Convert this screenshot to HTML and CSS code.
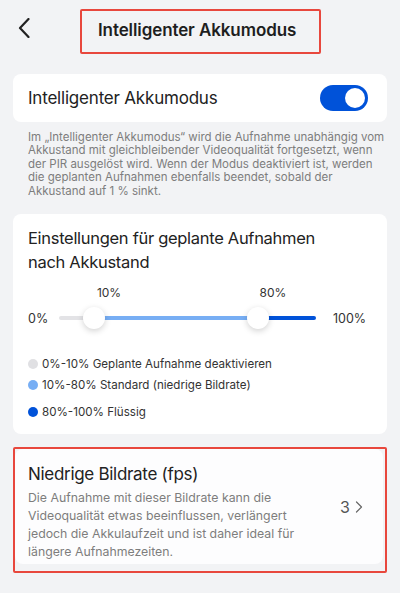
FILE: index.html
```html
<!DOCTYPE html>
<html lang="de">
<head>
<meta charset="utf-8">
<link rel="stylesheet" href="styles.css">
</head>
<body>
<header class="topbar">
  <svg class="back" width="12" height="20" viewBox="0 0 12 20"><path d="M10.5 1 L2 10 L10.5 19" fill="none" stroke="#222" stroke-width="2.2" stroke-linecap="round" stroke-linejoin="round"/></svg>
  <div class="title-box"><h1 class="title">Intelligenter Akkumodus</h1></div>
</header>

<section class="card row-card">
  <span class="row-label">Intelligenter Akkumodus</span>
  <span class="toggle"><span class="knob"></span></span>
</section>
<p class="note">Im „Intelligenter Akkumodus“ wird die Aufnahme unabhängig vom Akkustand mit gleichbleibender Videoqualität fortgesetzt, wenn der PIR ausgelöst wird. Wenn der Modus deaktiviert ist, werden die geplanten Aufnahmen ebenfalls beendet, sobald der Akkustand auf 1 % sinkt.</p>

<section class="card slider-card">
  <h2 class="card-title slider-title">Einstellungen für geplante Aufnahmen nach Akkustand</h2>
  <div class="marks">
    <span class="mark" style="left:35px">10%</span>
    <span class="mark" style="left:199px">80%</span>
  </div>
  <div class="slider-row">
    <span class="end">0%</span>
    <div class="track">
      <span class="seg seg-gray"></span>
      <span class="seg seg-light"></span>
      <span class="seg seg-dark"></span>
      <span class="thumb" style="left:35px"></span>
      <span class="thumb" style="left:199px"></span>
    </div>
    <span class="end end-right">100%</span>
  </div>
  <ul class="legend">
    <li><span class="dot dot-gray"></span>0%-10% Geplante Aufnahme deaktivieren</li>
    <li><span class="dot dot-light"></span>10%-80% Standard (niedrige Bildrate)</li>
    <li class="legend-last"><span class="dot dot-dark"></span>80%-100% Flüssig</li>
  </ul>
</section>

<div class="highlight">
  <section class="card fps-card">
    <div class="fps-text">
      <h2 class="card-title fps-title">Niedrige Bildrate (fps)</h2>
      <p class="fps-desc">Die Aufnahme mit dieser Bildrate kann die Videoqualität etwas beeinflussen, verlängert jedoch die Akkulaufzeit und ist daher ideal für längere Aufnahmezeiten.</p>
    </div>
    <div class="fps-value">3<svg width="8" height="12" viewBox="0 0 8 12"><path d="M1.5 1 L6.5 6 L1.5 11" fill="none" stroke="#666" stroke-width="1.2" stroke-linecap="round" stroke-linejoin="round"/></svg></div>
  </section>
</div>
</body>
</html>
```
FILE: styles.css
```css
* { box-sizing: border-box; }
html, body { margin: 0; padding: 0; }
body {
  background: #f2f3f5;
  font-family: Inter, "Noto Sans", sans-serif;
  color: #222;
  width: 400px;
  height: 593px;
  overflow: hidden;
}
.topbar {
  display: flex;
  align-items: flex-start;
  height: 64px;
  padding: 9px 0 10px 18px;
}
.back { margin-top: 9px; }
.title-box {
  margin-left: 50px;
  width: 241px;
  height: 45px;
  border: 2px solid #e8473d;
  border-radius: 2px;
  display: flex;
  align-items: center;
  padding: 0 0 4px 16px;
}
.title {
  margin: 0;
  font-size: 17px;
  font-weight: 600;
  letter-spacing: -0.1px;
  color: #1e1e1e;
}
.card {
  background: #fff;
  border-radius: 8px;
  margin: 0 13px;
}
.row-card {
  margin-top: 10px;
  height: 48px;
  display: flex;
  align-items: center;
  justify-content: space-between;
  padding: 0 19px 0 15px;
}
.row-label { font-size: 17px; color: #222; letter-spacing: -0.2px; }
.toggle {
  width: 48px;
  height: 26px;
  border-radius: 13px;
  background: #0052d9;
  display: flex;
  align-items: center;
  justify-content: flex-end;
  padding-right: 3px;
}
.knob {
  width: 20px;
  height: 20px;
  border-radius: 50%;
  background: #fff;
}
.note {
  margin: 9px 14px 0 28px;
  font-size: 11.5px;
  line-height: 13.4px;
  color: #7d7d7d;
}
.slider-card {
  margin-top: 16px;
  padding: 12px 15px 14px 15px;
}
.card-title {
  margin: 0;
  font-weight: 400;
  line-height: 24px;
  letter-spacing: -0.3px;
  color: #222;
}
.slider-title { font-size: 16.5px; max-width: 320px; }
.fps-title { font-size: 17px; }
.marks {
  position: relative;
  height: 16px;
  margin-top: 11px;
  margin-left: 46px;
}
.mark {
  position: absolute;
  top: 0;
  transform: translateX(-50%);
  font-size: 12px;
  color: #333;
}
.slider-row {
  display: flex;
  align-items: center;
  margin-top: 6px;
  height: 22px;
}
.end { font-size: 12.5px; color: #333; width: 31px; }
.end-right { width: auto; margin-left: 17px; }
.track {
  position: relative;
  width: 257px;
  height: 4px;
  display: flex;
}
.seg { height: 4px; }
.seg-gray { width: 35px; background: #e3e3e6; border-radius: 2px 0 0 2px; }
.seg-light { width: 164px; background: #77aef4; }
.seg-dark { flex: 1; background: #0052d9; border-radius: 0 2px 2px 0; }
.thumb {
  position: absolute;
  top: 50%;
  width: 22px;
  height: 22px;
  margin: -11px 0 0 -11px;
  border-radius: 50%;
  background: #fff;
  box-shadow: 0 2px 6px rgba(0,0,0,0.18);
}
.legend {
  list-style: none;
  margin: 27px 0 0 0;
  padding: 0;
}
.legend li {
  display: flex;
  align-items: center;
  font-size: 11.6px;
  color: #333;
  height: 16px;
  margin-bottom: 5px;
}
.legend li.legend-last { margin-top: 11px; margin-bottom: 0; }
.dot {
  width: 10px;
  height: 10px;
  border-radius: 50%;
  margin-right: 4px;
}
.dot-gray { background: #e0e0e3; }
.dot-light { background: #77aef4; }
.dot-dark { background: #0052d9; }
.highlight {
  margin: 13px 0 0 13px;
  width: 374px;
  height: 126px;
  border: 2px solid #e8473d;
  border-radius: 2px;
  padding: 0 2px 7px 0;
}
.fps-card {
  margin: 0;
  height: 100%;
  border-radius: 8px;
  display: flex;
  align-items: flex-start;
  padding: 13px 20px 0 13px;
  background: #fdfdfe;
}
.fps-text { flex: 1; padding-right: 20px; }
.fps-desc {
  margin: 3px 0 0 0;
  font-size: 12.3px;
  line-height: 18px;
  color: #7d7d7d;
}
.fps-value {
  align-self: center;
  margin-top: -13px;
  display: flex;
  align-items: center;
  gap: 5px;
  font-size: 16px;
  color: #555;
}
```
